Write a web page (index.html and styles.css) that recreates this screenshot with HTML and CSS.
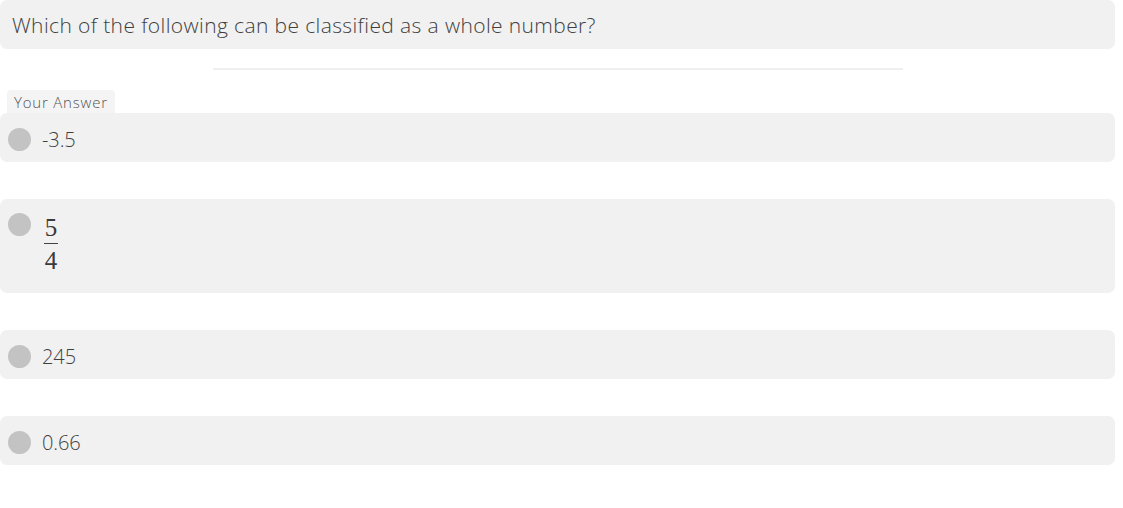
FILE: index.html
```html
<!DOCTYPE html>
<html>
<head>
<meta charset="utf-8">
<link rel="stylesheet" href="styles.css">
</head>
<body>
<div class="quiz">
  <div class="question">Which of the following can be classified as a whole number?</div>
  <hr class="divider">
  <div class="tag">Your Answer</div>
  <div class="option first">
    <span class="dot"></span>
    <span class="label">-3.5</span>
  </div>
  <div class="option frac-option">
    <span class="dot"></span>
    <span class="frac">
      <span class="num">5</span>
      <span class="bar"></span>
      <span class="den">4</span>
    </span>
  </div>
  <div class="option">
    <span class="dot"></span>
    <span class="label">245</span>
  </div>
  <div class="option">
    <span class="dot"></span>
    <span class="label">0.66</span>
  </div>
</div>
</body>
</html>
```
FILE: styles.css
```css
html, body {
  margin: 0;
  padding: 0;
  background: #ffffff;
}
.quiz {
  width: 1115px;
  font-family: "Open Sans", "Noto Sans", sans-serif;
  font-weight: 300;
  color: #3f3f3f;
}
.question {
  height: 49px;
  box-sizing: border-box;
  background: #f1f1f1;
  border-radius: 7px;
  padding-left: 12px;
  padding-top: 1px;
  display: flex;
  align-items: center;
  font-size: 21px;
  letter-spacing: 0.38px;
}
.divider {
  width: 690px;
  margin: 19px auto 0;
  border: 0;
  height: 2px;
  background: #efefef;
}
.tag {
  display: inline-block;
  margin: 20px 0 0 7px;
  padding: 0 7px 0 7px;
  height: 23px;
  line-height: 25px;
  font-size: 15px;
  letter-spacing: 0.8px;
  color: #555;
  background: #f4f4f4;
  border-radius: 4px 4px 0 0;
  vertical-align: top;
}
.option {
  display: flex;
  align-items: flex-start;
  gap: 11px;
  height: 49px;
  box-sizing: border-box;
  padding: 15px 0 0 8px;
  background: #f1f1f1;
  border-radius: 7px;
  margin-top: 37px;
}
.option.first {
  margin-top: 0;
}
.option.frac-option {
  height: 94px;
  padding-top: 14px;
}
.dot {
  width: 23px;
  height: 23px;
  border-radius: 50%;
  background: #c3c3c3;
  flex: none;
}
.label {
  font-size: 20px;
  line-height: 24px;
  letter-spacing: -0.1px;
}
.frac {
  display: flex;
  flex-direction: column;
  align-items: center;
  font-family: "Liberation Serif", "DejaVu Serif", serif;
  font-weight: 400;
  font-size: 25px;
  color: #3a3a3a;
  margin-left: 2px;
  padding-top: 2px;
}
.num, .den {
  line-height: 25px;
}
.bar {
  width: 14px;
  height: 1px;
  background: #444;
  margin: 3px 0 4px;
}
```
